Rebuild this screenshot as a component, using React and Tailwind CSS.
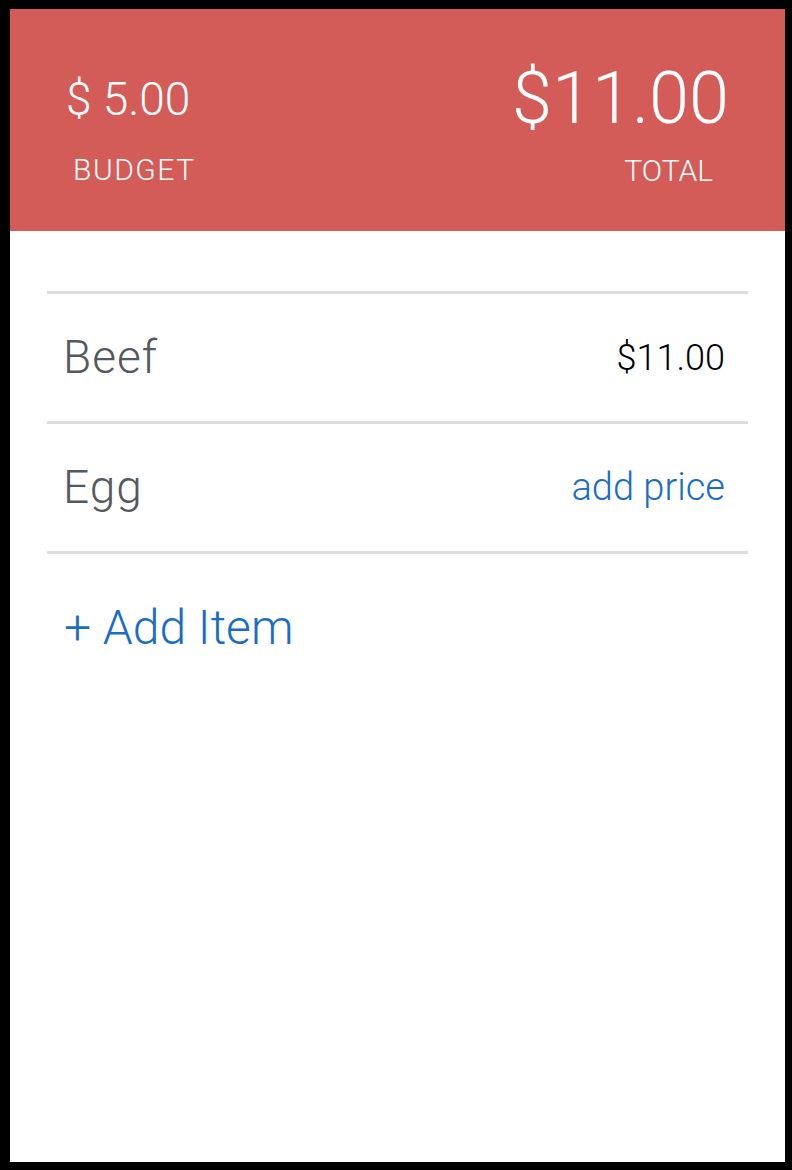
const items = [
  { name: "Beef", price: "$11.00" },
  { name: "Egg", price: null },
];

const App = () => {
  return (
    <div
      className="w-[792px] h-[1170px] bg-black pt-[9px] pl-[10px] pr-[7px] pb-[8px]"
      style={{ fontFamily: "Roboto, 'Liberation Sans', sans-serif" }}
    >
      <div className="h-full bg-white flex flex-col">
        {/* header */}
        <div className="h-[222px] bg-[#d35c58] px-[56px] flex justify-between text-white font-light">
          <div className="flex flex-col items-start pt-[67px]">
            <div className="text-[46px] leading-none">$ 5.00</div>
            <div className="text-[30px] leading-none tracking-[1.5px] mt-[33px] ml-[7px]">BUDGET</div>
          </div>
          <div className="flex flex-col items-end pt-[54px]">
            <div className="text-[72px] leading-none">$11.00</div>
            <div className="text-[30px] leading-none mt-[21px] mr-[16px]">TOTAL</div>
          </div>
        </div>

        {/* list */}
        <div className="mx-[37px] mt-[60px]">
          {items.map((it) => (
            <div
              key={it.name}
              className="h-[130px] border-t-[3px] border-[#dddddd] flex items-center justify-between pl-[16px] pr-[23px] font-light"
            >
              <span className="text-[46px] tracking-[1px] text-[#54595f]">{it.name}</span>
              {it.price ? (
                <span className="text-[36px] text-black">{it.price}</span>
              ) : (
                <span className="text-[38px] text-[#1a6dc4]">add price</span>
              )}
            </div>
          ))}
          <div className="border-t-[3px] border-[#dddddd]" />
          <div className="pl-[17px] pt-[50px] text-[48px] leading-none text-[#1a6dc4] font-light">
            + Add Item
          </div>
        </div>
      </div>
    </div>
  );
};

export default App;
